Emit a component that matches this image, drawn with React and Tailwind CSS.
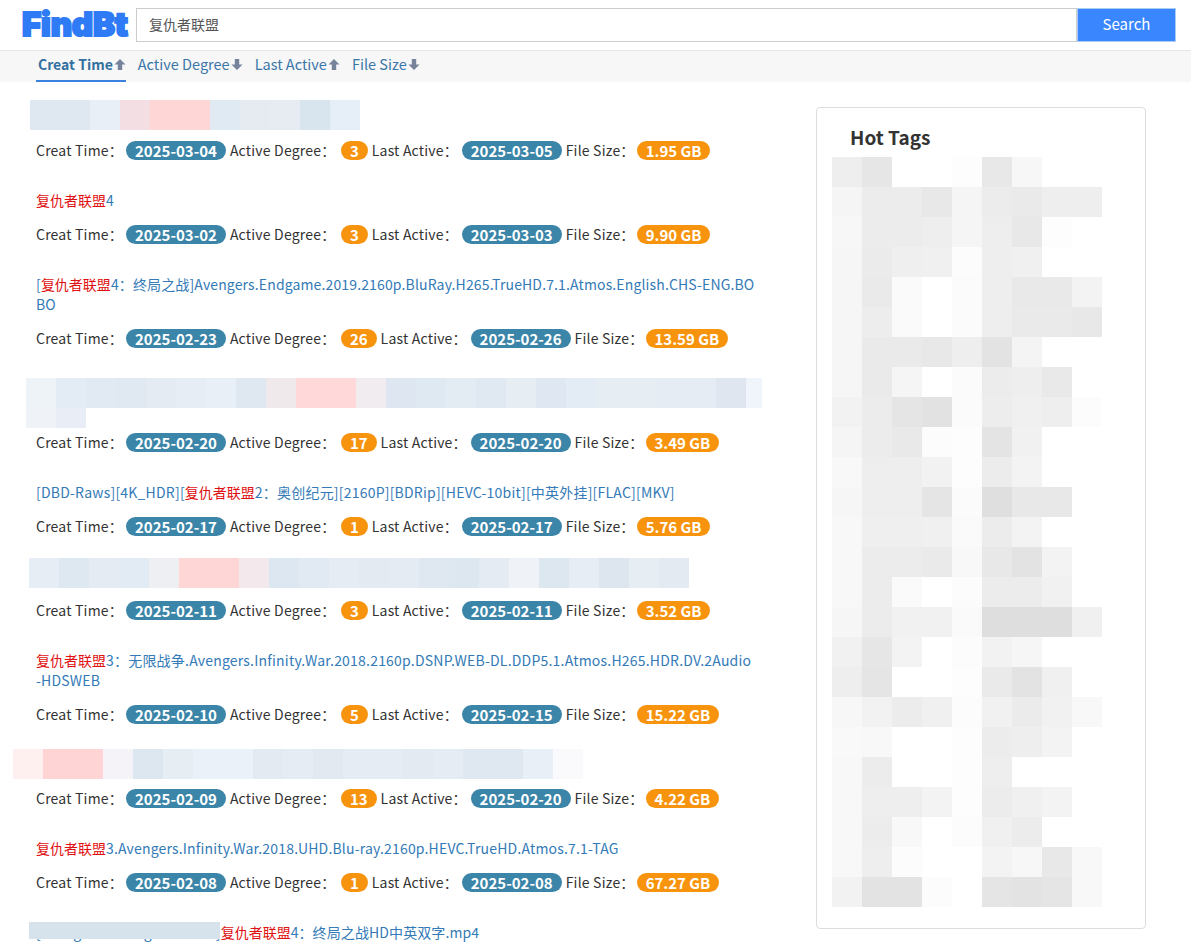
import React from 'react';

const FONT = "font-['Noto_Sans_CJK_SC','Noto_Sans',sans-serif]";

const hot = [
  'ee e6 ff ff fd e8 f7 ff ff',
  'f5 ec ec e8 f5 ec ea ee ee',
  'f7 ec ec ee f5 ee e8 fd ff',
  'f6 eb ef f0 fc ee f0 ff ff',
  'f6 ea fa ff fb ee e9 e9 f3',
  'f6 ed fa ff fb ee ea ea e8',
  'f6 ea ea e8 ee e3 f4 ff ff',
  'f6 ea f5 ff fb ec ee e9 ff',
  'f2 ec e5 e2 fb ed f0 ee fc',
  'f5 ec e9 fc fd e4 f1 ff ff',
  'f8 ee ee f2 fd ec f3 ff ff',
  'f6 ee ee e5 fb df e8 e8 ff',
  'f8 ef ef f0 fa ec f3 ff ff',
  'f8 ec ec ea f8 e8 e3 f3 ff',
  'f8 ec fa ff fc ec ec f1 ff',
  'f6 ec f1 f1 fa de de de f0',
  'f1 e6 f3 ff fc f2 f6 ff ff',
  'ee e5 ff ff fd ea e3 f0 ff',
  'f7 f2 ec f0 fc f1 eb f1 f8',
  'f9 f8 ff ff fd ec ee f3 ff',
  'f8 ec ff ff fd ee ff ff ff',
  'f8 ee ee f3 fd ec f0 f3 ff',
  'f8 ec f8 ff fc f0 ec ff ff',
  'f8 ee fc ff ff f3 f7 e8 f8',
  'f2 e3 e3 fc ff e5 e3 e5 f8',
].map((r) => r.split(' ').map((g) => `#${g}${g}${g}`));

// blurred-out title text
const Mosaic = ({ rows, width, height = 30, className }) => (
  <svg width={width} height={rows.length * height} className={className} shapeRendering="crispEdges">
    {rows.map((row, y) =>
      row.map((c, x) => <rect key={`${x}-${y}`} x={x * 30} y={y * height} width="30" height={height} fill={c} />)
    )}
  </svg>
);

const SortArrow = ({ up }) => (
  <svg width="12" height="11" viewBox="0 0 12 11" className={`ml-px mt-px text-[#76839a] ${up ? '' : 'rotate-180'}`}>
    <path d="M6 0 11.5 5.6H8.2V11H3.8V5.6H.5Z" fill="currentColor" />
  </svg>
);

const Badge = ({ color, children }) => (
  <span className={`inline-block h-[19px] whitespace-nowrap rounded-full px-[9px] text-[15px] font-bold leading-[19px] tracking-normal text-white ${color}`}>{children}</span>
);

const Meta = ({ created, degree, last, size }) => (
  <div className="flex h-5 items-center gap-1 whitespace-nowrap text-[14px] leading-5 tracking-[0.2px] text-[#333]">
    <span className="w-[86px]">Creat Time：</span>
    <Badge color="bg-[#3b85a8]">{created}</Badge>
    <span className="w-[107px]">Active Degree：</span>
    <Badge color="bg-[#f7930d]">{degree}</Badge>
    <span className="w-[86px]">Last Active：</span>
    <Badge color="bg-[#3b85a8]">{last}</Badge>
    <span className="w-[67px]">File Size：</span>
    <Badge color="bg-[#f7930d]">{size}</Badge>
  </div>
);

const Hl = () => <span className="tracking-normal text-[#e01010]">复仇者联盟</span>;

const items = [
  {
    meta: ['2025-03-04', '3', '2025-03-05', '1.95 GB'],
    title: <>&nbsp;</>,
    mosaic: { width: 330, top: 'top-[-6px]', left: 'left-[-6px]', rows: [['#dfe8f0', '#dfe8f0', '#e8eff6', '#f3dfe3', '#ffd6d6', '#ffd6d6', '#e0eaf3', '#e5ebf1', '#e6ecf2', '#d9e5ee', '#e6eff7']] },
  },
  { meta: ['2025-03-02', '3', '2025-03-03', '9.90 GB'], title: <><Hl />4</> },
  {
    meta: ['2025-02-23', '26', '2025-02-26', '13.59 GB'],
    track: 'tracking-[0.14px]',
    title: <>[<Hl />4：终局之战]Avengers.Endgame.2019.2160p.BluRay.H265.TrueHD.7.1.Atmos.English.CHS-ENG.BO<br />BO</>,
  },
  {
    meta: ['2025-02-20', '17', '2025-02-20', '3.49 GB'],
    title: <>&nbsp;<br />&nbsp;</>,
    mosaic: {
      width: 736, top: 'top-0', left: 'left-[-10px]',
      rows: [['#eef3f8', '#e3ebf4', '#e1e9f2', '#e0e9f2', '#e4ebf3', '#e6edf4', '#e9eff6', '#dfe8f1', '#f0e9ec', '#ffd9d9', '#ffd9d9', '#f0ecf0', '#dee7f1', '#dfe9f2', '#e3ebf3', '#e0e9f2', '#e6eef4', '#dfe8f2', '#e3ebf4', '#e6eef3', '#e6eef4', '#e5ecf4', '#e5ecf3', '#dfe6f0', '#eff5fa']],
      extra: ['#eff3f8', '#e9eef6'],
    },
  },
  {
    meta: ['2025-02-17', '1', '2025-02-17', '5.76 GB'],
    track: 'tracking-[0.21px]',
    title: <>[DBD-Raws][4K_HDR][<Hl />2：奥创纪元][2160P][BDRip][HEVC-10bit][中英外挂][FLAC][MKV]</>,
  },
  {
    meta: ['2025-02-11', '3', '2025-02-11', '3.52 GB'],
    title: <>&nbsp;</>,
    mosaic: { width: 660, top: 'top-[-8px]', left: 'left-[-7px]', rows: [['#e6edf4', '#dee8f1', '#e4ebf3', '#e2eaf3', '#eeeff2', '#ffd6d6', '#ffd6d6', '#f3e8ec', '#dde7f1', '#e1e9f2', '#e5ecf4', '#e3eaf2', '#e4ebf2', '#dfe7f0', '#dce7f0', '#e4ebf3', '#eff3f8', '#dde7f0', '#e6edf4', '#dde6ef', '#e6edf3', '#e3eaf2']] },
  },
  {
    meta: ['2025-02-10', '5', '2025-02-15', '15.22 GB'],
    track: 'tracking-[0.21px]',
    title: <><Hl />3：无限战争.Avengers.Infinity.War.2018.2160p.DSNP.WEB-DL.DDP5.1.Atmos.H265.HDR.DV.2Audio<br />-HDSWEB</>,
  },
  {
    meta: ['2025-02-09', '13', '2025-02-20', '4.22 GB'],
    title: <>&nbsp;</>,
    mosaic: { width: 570, top: 'top-[-5px]', left: 'left-[-23px]', rows: [['#fff0f0', '#ffd4d4', '#ffd4d4', '#f5f3f8', '#dde7f0', '#e6edf3', '#ebf1f8', '#ebf1f8', '#e3eaf2', '#e6ecf3', '#e3e9f1', '#e6ecf3', '#e6ecf3', '#e3eaf2', '#e6ecf4', '#dfe7f1', '#dfe7f1', '#e8eff7', '#fafafc']] },
  },
  {
    meta: ['2025-02-08', '1', '2025-02-08', '67.27 GB'],
    title: <><Hl />3.Avengers.Infinity.War.2018.UHD.Blu-ray.2160p.HEVC.TrueHD.Atmos.7.1-TAG</>,
  },
];

const Tab = ({ active, up, children }) => (
  <div className={`flex h-[31px] items-center border-b-2 pb-[3px] pl-[2px] ${active ? 'border-[#3b82e0] text-[14px] font-bold text-[#33709f]' : 'border-transparent text-[14.5px] text-[#3a76a8]'}`}>
    {children}
    <SortArrow up={up} />
  </div>
);

export default function App() {
  return (
    <div className={`h-[945px] w-[1191px] overflow-hidden bg-white ${FONT}`}>
      <header className="flex h-[51px] items-center border-b border-[#e6e6e6] pb-[1px] pl-[22px] pr-[15px]">
        <div className="w-[114px] font-['Inter',sans-serif] text-[33px] font-black leading-none tracking-[-0.2px] text-[#2f7bf6] [-webkit-text-stroke:2px_#2f7bf6]">FindBt</div>
        <div className="flex h-[34px] flex-1">
          <div className="flex flex-1 items-center border border-[#cccccc] px-3 text-[14px] text-[#555]">复仇者联盟</div>
          <button className="w-[99px] border border-[#a9ccf5] bg-[#3a86ff] text-[15px] text-white">Search</button>
        </div>
      </header>
      <nav className="flex h-[31px] gap-[10px] bg-[#f7f7f7] pl-9">
        <Tab active up>Creat Time</Tab>
        <Tab>Active Degree</Tab>
        <Tab up>Last Active</Tab>
        <Tab>File Size</Tab>
      </nav>
      <div className="flex items-start">
        <main className="w-[816px] pl-9 pt-6">
          <div className="flex w-[740px] flex-col gap-[30px]">
            {items.map((it) => (
              <div key={it.meta[0]} className="flex flex-col gap-[14px]">
                <div className={`relative whitespace-nowrap text-[14px] leading-5 text-[#337ab7] ${it.track || 'tracking-[0.18px]'}`}>
                  {it.title}
                  {it.mosaic && (
                    <div className={`absolute ${it.mosaic.top} ${it.mosaic.left}`}>
                      <Mosaic rows={it.mosaic.rows} width={it.mosaic.width} className="block" />
                      {it.mosaic.extra && <Mosaic rows={[it.mosaic.extra]} width={60} height={20} className="block" />}
                    </div>
                  )}
                </div>
                <Meta created={it.meta[0]} degree={it.meta[1]} last={it.meta[2]} size={it.meta[3]} />
              </div>
            ))}
            <div className="relative whitespace-nowrap text-[14px] leading-5 tracking-[0.1px] text-[#337ab7]">
              [Avengers-4.Endgame.2019]<Hl />4：终局之战HD中英双字.mp4
              <div className="absolute left-[-7px] top-0 h-[17px] w-[191px] bg-[#d6e2ec]" />
            </div>
          </div>
        </main>
        <aside className="mt-[25px] h-[822px] w-[330px] rounded border border-[#dddddd] px-[15px] pt-[15px]">
          <h2 className="pl-[18px] text-[19px] font-bold leading-[28px] text-[#333]">Hot Tags</h2>
          <Mosaic rows={hot} width={270} className="mt-[6px] block" />
        </aside>
      </div>
    </div>
  );
}
